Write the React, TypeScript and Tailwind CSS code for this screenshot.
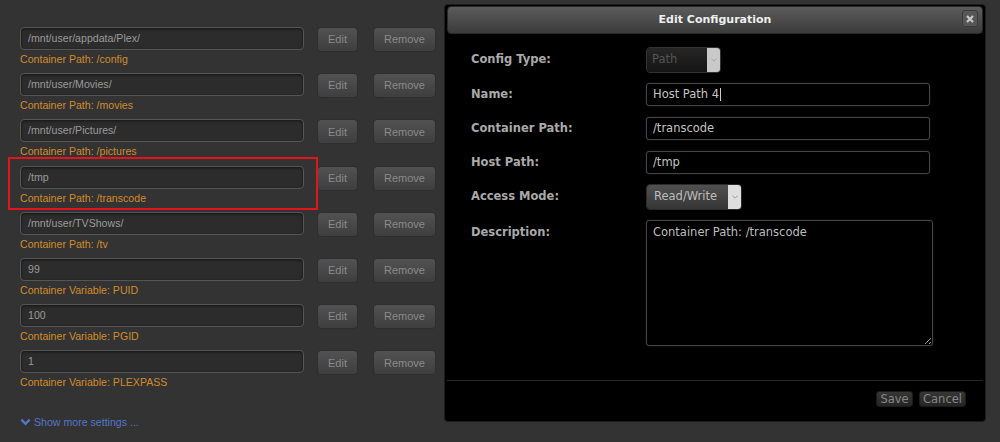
import { useState } from "react";

type Mapping = {
  value: string;
  label: string;
  highlight?: boolean;
};

const mappings: Mapping[] = [
  { value: "/mnt/user/appdata/Plex/", label: "Container Path: /config" },
  { value: "/mnt/user/Movies/", label: "Container Path: /movies" },
  { value: "/mnt/user/Pictures/", label: "Container Path: /pictures" },
  { value: "/tmp", label: "Container Path: /transcode", highlight: true },
  { value: "/mnt/user/TVShows/", label: "Container Path: /tv" },
  { value: "99", label: "Container Variable: PUID" },
  { value: "100", label: "Container Variable: PGID" },
  { value: "1", label: "Container Variable: PLEXPASS" },
];

function Chevron({ className }: { className?: string }) {
  return (
    <svg viewBox="0 0 10 6" className={className} fill="none">
      <polyline points="2,1.5 5,4.5 8,1.5" stroke="currentColor" strokeWidth="1" />
    </svg>
  );
}

function MappingRow({ m }: { m: Mapping }) {
  return (
    <div className="relative mb-[7.2px]">
      <div className="flex items-start">
        <div className="h-[23px] w-[284px] rounded-[4px] border border-[#555] bg-[#2c2c2c] px-[7px] text-[10.6px] leading-[21px] text-[#9a9a9a] shadow-[inset_0_1px_3px_rgba(0,0,0,0.55)]">
          {m.value}
        </div>
        <button className="ml-[13px] h-[25px] w-[41px] rounded-[4px] border border-[#2e2e2e] bg-gradient-to-b from-[#525252] to-[#3e3e3e] text-[11px] text-[#8a8a8a]">
          Edit
        </button>
        <button className="ml-[15px] h-[25px] w-[63px] rounded-[4px] border border-[#2e2e2e] bg-gradient-to-b from-[#525252] to-[#3e3e3e] text-[11px] text-[#8a8a8a]">
          Remove
        </button>
      </div>
      <div className="text-[10.6px] leading-[14px] text-[#d18b2c]">{m.label}</div>
      {m.highlight && (
        <div className="absolute left-[-12px] top-[-9px] h-[53px] w-[310px] border-2 border-[#e3141c]" />
      )}
    </div>
  );
}

function DialogInput({ value, caret }: { value: string; caret?: boolean }) {
  return (
    <div className="flex h-[23px] w-[284px] items-center rounded-[3px] border border-[#444] bg-black px-[6px] text-[11.5px] font-normal text-[#c4c4c4] shadow-[0_0_2px_rgba(90,90,90,0.4)]">
      {value}
      {caret && <span className="ml-[1px] h-[13px] w-px bg-[#ccc]" />}
    </div>
  );
}

function EditDialog() {
  const [desc] = useState("Container Path: /transcode");

  return (
    <div className="absolute left-[444px] top-[4px] flex h-[418px] w-[542px] flex-col rounded-[4px] border border-[#1c1c1c] bg-black px-[2px] pt-px font-['DejaVu_Sans',Verdana,sans-serif]">
      {/* Title bar */}
      <div className="relative flex h-[28px] items-center justify-center rounded-[4px] border border-[#2a2a2a] bg-gradient-to-b from-[#5c5c5c] to-[#3b3b3b]">
        <span className="text-[11px] font-bold text-[#eee]">Edit Configuration</span>
        <button className="absolute right-[4px] top-[3px] flex h-[17px] w-[16px] items-center justify-center rounded-[3px] border border-[#3a3a3a] bg-[#575757]">
          <svg viewBox="0 0 8 8" className="h-[8px] w-[8px]">
            <path d="M1 1 L7 7 M7 1 L1 7" stroke="#c8c8c8" strokeWidth="2.2" />
          </svg>
        </button>
      </div>

      {/* Body */}
      <div className="pl-[24px] text-[11.5px] font-bold text-[#a9a9a9]">
        <div className="mt-[13px] flex h-[26px] items-center">
          <div className="w-[175px]">Config Type:</div>
          <div className="flex h-[26px] w-[75px] overflow-hidden rounded-[4px] border border-[#333]">
            <div className="flex flex-1 items-center bg-gradient-to-b from-[#262626] to-[#151515] pl-[5px] text-[11.5px] font-normal text-[#555]">
              Path
            </div>
            <div className="flex w-[13px] items-center justify-center bg-[#c9c9c9] text-[#999]">
              <Chevron className="h-[6px] w-[8px]" />
            </div>
          </div>
        </div>

        <div className="mt-[10px] flex h-[23px] items-center">
          <div className="w-[175px]">Name:</div>
          <DialogInput value="Host Path 4" caret />
        </div>

        <div className="mt-[11px] flex h-[23px] items-center">
          <div className="w-[175px]">Container Path:</div>
          <DialogInput value="/transcode" />
        </div>

        <div className="mt-[11px] flex h-[23px] items-center">
          <div className="w-[175px]">Host Path:</div>
          <DialogInput value="/tmp" />
        </div>

        <div className="mt-[10px] flex h-[26px] items-center">
          <div className="w-[175px]">Access Mode:</div>
          <div className="flex h-[26px] w-[96px] overflow-hidden rounded-[4px] border border-[#2a2a2a]">
            <div className="flex flex-1 items-center bg-gradient-to-b from-[#505050] to-[#363636] pl-[7px] text-[11.5px] font-normal text-[#bdbdbd]">
              Read/Write
            </div>
            <div className="flex w-[13px] items-center justify-center bg-[#dedede] text-[#888]">
              <Chevron className="h-[6px] w-[8px]" />
            </div>
          </div>
        </div>

        <div className="mt-[10px] flex items-start">
          <div className="w-[175px] pt-[5px] leading-[14px]">Description:</div>
          <textarea
            readOnly
            value={desc}
            className="h-[126px] w-[287px] rounded-[3px] border border-[#444] bg-black px-[6px] pt-[4px] text-[11.5px] font-normal leading-[14px] text-[#bdbdbd] outline-none shadow-[0_0_2px_rgba(90,90,90,0.4)]"
          />
        </div>
      </div>

      {/* Footer */}
      <div className="mt-[34px] h-px bg-[#262626]" />
      <div className="flex justify-end gap-[6px] pr-[17px] pt-[10px]">
        <button className="h-[16px] w-[37px] rounded-[3px] border border-[#1a1a1a] bg-gradient-to-b from-[#363636] to-[#242424] text-[11.5px] leading-[14px] text-[#868686]">
          Save
        </button>
        <button className="h-[16px] w-[47px] rounded-[3px] border border-[#1a1a1a] bg-gradient-to-b from-[#363636] to-[#242424] text-[11.5px] leading-[14px] text-[#868686]">
          Cancel
        </button>
      </div>
    </div>
  );
}

export default function App() {
  return (
    <div className="relative h-[442px] w-[1000px] overflow-hidden bg-[#333] font-['Liberation_Sans',Arial,sans-serif]">
      <div className="pl-5 pt-[27px]">
        {mappings.map((m) => (
          <MappingRow key={m.value} m={m} />
        ))}

        {/* Show more */}
        <div className="mt-[26px] flex items-center gap-[3px] text-[10.6px] leading-[14px] text-[#5276c8]">
          <svg viewBox="0 0 12 8" className="h-[8px] w-[11px]" fill="none">
            <polyline points="1.5,1.5 6,6 10.5,1.5" stroke="currentColor" strokeWidth="2.6" />
          </svg>
          <span>Show more settings ...</span>
        </div>
      </div>

      <EditDialog />
    </div>
  );
}
